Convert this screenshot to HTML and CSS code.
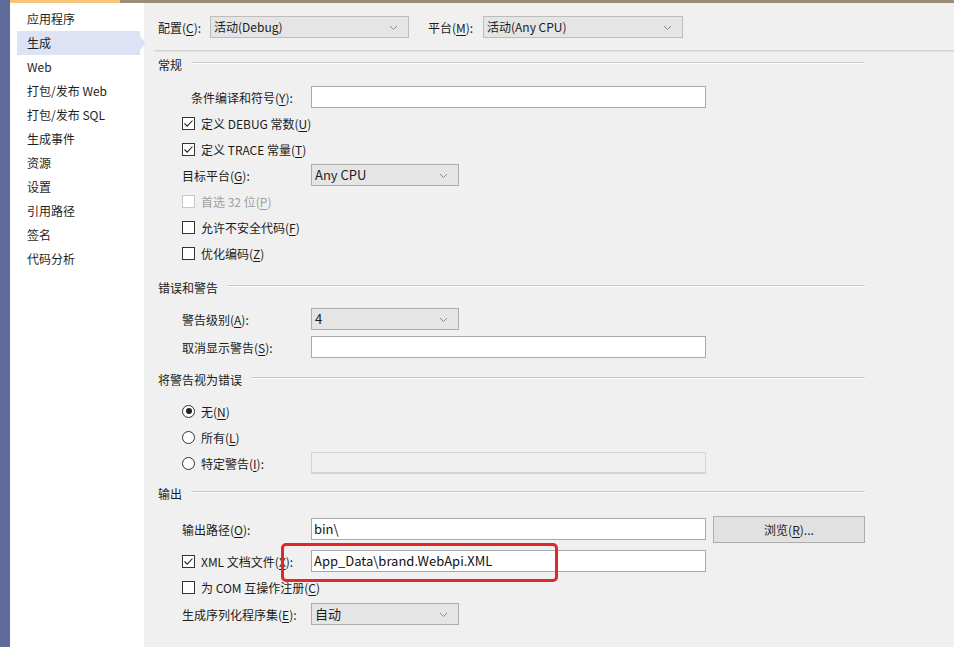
FILE: index.html
```html
<!DOCTYPE html>
<html>

<head>
  <meta charset="utf-8" />
  <meta name="viewport" content="width=device-width, initial-scale=1" />
  <title>项目属性 - 生成</title>
  <link rel="stylesheet" href="styles.css">
</head>

<body>
  <div class="window">
    <div class="rail"></div>

    <div class="content">
      <div class="topline"><div class="topline-tab"></div></div>

      <div class="main">
        <!-- left navigation -->
        <ul class="nav">
          <li class="nav-item">应用程序</li>
          <li class="nav-item active">生成</li>
          <li class="nav-item">Web</li>
          <li class="nav-item">打包/发布 Web</li>
          <li class="nav-item">打包/发布 SQL</li>
          <li class="nav-item">生成事件</li>
          <li class="nav-item">资源</li>
          <li class="nav-item">设置</li>
          <li class="nav-item">引用路径</li>
          <li class="nav-item">签名</li>
          <li class="nav-item">代码分析</li>
        </ul>

        <div class="panel">
          <div class="toolbar">
            <span class="tool-label">配置(<u>C</u>):</span>
            <div class="combo combo-config">活动(Debug)
              <svg class="chevron" width="9" height="6" viewBox="0 0 9 6"><polyline points="1,1 4.5,4.5 8,1" /></svg>
            </div>
            <span class="tool-label tool-label-gap">平台(<u>M</u>):</span>
            <div class="combo combo-platform">活动(Any CPU)
              <svg class="chevron" width="9" height="6" viewBox="0 0 9 6"><polyline points="1,1 4.5,4.5 8,1" /></svg>
            </div>
          </div>

          <div class="divider"></div>

          <!-- 常规 -->
          <div class="section-title"><span>常规</span><i class="rule"></i></div>
          <div class="rows rows-general">
            <div class="row">
              <span class="label label-indent">条件编译和符号(<u>Y</u>):</span>
              <div class="field"></div>
            </div>
            <div class="row">
              <span class="check checked">
                <svg width="11" height="11" viewBox="0 0 11 11"><polyline points="1.5,5.5 4.2,8.2 9.5,2.5" /></svg>
              </span>
              <span>定义 DEBUG 常数(<u>U</u>)</span>
            </div>
            <div class="row">
              <span class="check checked">
                <svg width="11" height="11" viewBox="0 0 11 11"><polyline points="1.5,5.5 4.2,8.2 9.5,2.5" /></svg>
              </span>
              <span>定义 TRACE 常量(<u>T</u>)</span>
            </div>
            <div class="row">
              <span class="label">目标平台(<u>G</u>):</span>
              <div class="combo combo-small combo-strong">Any CPU
                <svg class="chevron" width="9" height="6" viewBox="0 0 9 6"><polyline points="1,1 4.5,4.5 8,1" /></svg>
              </div>
            </div>
            <div class="row disabled">
              <span class="check"></span>
              <span>首选 32 位(<u>P</u>)</span>
            </div>
            <div class="row">
              <span class="check"></span>
              <span>允许不安全代码(<u>F</u>)</span>
            </div>
            <div class="row">
              <span class="check"></span>
              <span>优化编码(<u>Z</u>)</span>
            </div>
          </div>

          <!-- 错误和警告 -->
          <div class="section-title section-errors"><span>错误和警告</span><i class="rule"></i></div>
          <div class="rows rows-errors">
            <div class="row row-tall">
              <span class="label">警告级别(<u>A</u>):</span>
              <div class="combo combo-small combo-strong">4
                <svg class="chevron" width="9" height="6" viewBox="0 0 9 6"><polyline points="1,1 4.5,4.5 8,1" /></svg>
              </div>
            </div>
            <div class="row row-tall">
              <span class="label">取消显示警告(<u>S</u>):</span>
              <div class="field"></div>
            </div>
          </div>

          <!-- 将警告视为错误 -->
          <div class="section-title section-treat"><span>将警告视为错误</span><i class="rule"></i></div>
          <div class="rows rows-treat">
            <div class="row">
              <span class="radio checked"></span>
              <span>无(<u>N</u>)</span>
            </div>
            <div class="row">
              <span class="radio"></span>
              <span>所有(<u>L</u>)</span>
            </div>
            <div class="row">
              <span class="label label-radio"><span class="radio"></span>特定警告(<u>I</u>):</span>
              <div class="field field-disabled"></div>
            </div>
          </div>

          <!-- 输出 -->
          <div class="section-title section-output"><span>输出</span><i class="rule"></i></div>
          <div class="rows rows-output">
            <div class="row row-path">
              <span class="label">输出路径(<u>O</u>):</span>
              <div class="field">bin\</div>
              <button class="browse">浏览(<u>R</u>)...</button>
            </div>
            <div class="row row-xml">
              <span class="label label-check">
                <span class="check checked">
                  <svg width="11" height="11" viewBox="0 0 11 11"><polyline points="1.5,5.5 4.2,8.2 9.5,2.5" /></svg>
                </span>XML 文档文件(<u>X</u>):
              </span>
              <div class="field">App_Data\brand.WebApi.XML</div>
              <div class="highlight"></div>
            </div>
            <div class="row row-com">
              <span class="check"></span>
              <span>为 COM 互操作注册(<u>C</u>)</span>
            </div>
            <div class="row row-serial">
              <span class="label">生成序列化程序集(<u>E</u>):</span>
              <div class="combo combo-small combo-strong">自动
                <svg class="chevron" width="9" height="6" viewBox="0 0 9 6"><polyline points="1,1 4.5,4.5 8,1" /></svg>
              </div>
            </div>
          </div>
        </div>
      </div>
    </div>
  </div>
</body>

</html>
```

FILE: styles.css
```css
html,
body {
  margin: 0;
  height: 100%;
}

body {
  background: #f0f0f0;
  color: #1b1b1b;
  font-size: 12px;
  font-family: "Noto Sans CJK SC", "Noto Sans", sans-serif;
  overflow: hidden;
}

u {
  text-decoration: underline;
  text-underline-offset: 2px;
}

.window {
  display: flex;
  height: 647px;
}

.rail {
  width: 10px;
  background: #5d6a9a;
  flex-shrink: 0;
}

.content {
  flex: 1;
  display: flex;
  flex-direction: column;
}

.topline {
  height: 3px;
  background: #9c8e76;
  flex-shrink: 0;
}

.topline-tab {
  width: 110px;
  height: 3px;
  background: #f5c67c;
}

.main {
  flex: 1;
  display: flex;
}

/* navigation */
.nav {
  list-style: none;
  margin: 0;
  padding: 4px 4px 0 7px;
  width: 123px;
  background: white;
}

.nav-item {
  height: 24px;
  line-height: 24px;
  padding-left: 10px;
  color: #1e1e1e;
  position: relative;
}

.nav-item.active {
  background: #dde3f5;
}

.nav-item.active::after {
  content: "";
  position: absolute;
  right: -6px;
  top: 5px;
  border-left: 6px solid #dde3f5;
  border-top: 7px solid transparent;
  border-bottom: 7px solid transparent;
}

/* right panel */
.panel {
  flex: 1;
  padding-left: 14px;
}

.toolbar {
  display: flex;
  align-items: center;
  margin-top: 13px;
  height: 22px;
}

.tool-label {
  width: 52px;
}

.tool-label-gap {
  margin-left: 19px;
  width: 55px;
}

.divider {
  margin: 12px 0 0 -3px;
  height: 1px;
  background: #d2d2d2;
  border-bottom: 1px solid #e2e2e2;
}

.section-title {
  width: 707px;
  height: 20px;
  margin-top: 2px;
  display: flex;
  align-items: center;
  gap: 9px;
}

.rule {
  flex: 1;
  height: 0;
  border-top: 1px solid #c8c8c8;
  border-bottom: 1px solid #ffffff;
  margin-top: -2px;
}

.section-errors {
  margin-top: 11px;
}

.section-treat {
  margin-top: 8px;
}

.section-output {
  margin-top: 7px;
}

.rows {
  padding-left: 24px;
}

.rows-general {
  padding-top: 10px;
}

.rows-errors {
  padding-top: 8px;
}

.rows-treat {
  padding-top: 9px;
}

.rows-output {
  padding-top: 11px;
}

.row {
  height: 26px;
  display: flex;
  align-items: center;
  position: relative;
}

.row-tall {
  height: 28px;
}

.row-path {
  height: 30px;
}

.row-xml {
  height: 30px;
  margin-top: 2px;
}

.row-com {
  height: 22px;
}

.row-serial {
  height: 32px;
}

.label {
  width: 129px;
  flex-shrink: 0;
  display: flex;
  align-items: center;
}

.label-indent {
  padding-left: 9px;
  width: 120px;
}

.label-check .check,
.label-radio .radio {
  margin-right: 6px;
}

/* inputs */
.field {
  width: 391px;
  height: 20px;
  background: white;
  border: 1px solid #a9a9a9;
  font-size: 13px;
  line-height: 20px;
  padding: 0 0 0 2px;
  color: #111;
}

.field-disabled {
  background: #f0f0f0;
  border-color: #d4d4d4;
  height: 19px;
  border-bottom: 2px solid #d4d4d4;
}

.combo {
  position: relative;
  height: 20px;
  line-height: 20px;
  background: #e5e5e5;
  border: 1px solid #bdbdbd;
  padding-left: 3px;
  font-size: 12px;
}

.combo-strong {
  border-color: #adadad;
  font-size: 13px;
}

.combo-config {
  width: 194px;
}

.combo-platform {
  width: 195px;
}

.combo-small {
  width: 143px;
}

.chevron {
  position: absolute;
  right: 10px;
  top: 8px;
  fill: none;
  stroke: #8a8a8a;
  stroke-width: 1;
}

.browse {
  margin-left: 7px;
  width: 152px;
  height: 27px;
  background: #e1e1e1;
  border: 1px solid #adadad;
  font-family: inherit;
  font-size: 12px;
  color: #1b1b1b;
  padding: 0;
}

/* checkbox & radio */
.check {
  width: 11px;
  height: 11px;
  border: 1px solid #333;
  background: white;
  margin-right: 6px;
  flex-shrink: 0;
  display: inline-flex;
}

.check svg {
  fill: none;
  stroke: #222;
  stroke-width: 1.1;
}

.disabled {
  color: #a0a0a0;
}

.disabled .check {
  border-color: #c8c8c8;
}

.radio {
  width: 11px;
  height: 11px;
  border: 1px solid #333;
  border-radius: 50%;
  background: white;
  margin-right: 6px;
  flex-shrink: 0;
  position: relative;
}

.radio.checked::after {
  content: "";
  position: absolute;
  left: 2.5px;
  top: 2.5px;
  width: 6px;
  height: 6px;
  border-radius: 50%;
  background: #222;
}

/* red annotation box */
.highlight {
  position: absolute;
  left: 99px;
  top: -3px;
  width: 277px;
  height: 39px;
  box-sizing: border-box;
  border: 3px solid #e3262b;
  border-radius: 5px;
}
```
